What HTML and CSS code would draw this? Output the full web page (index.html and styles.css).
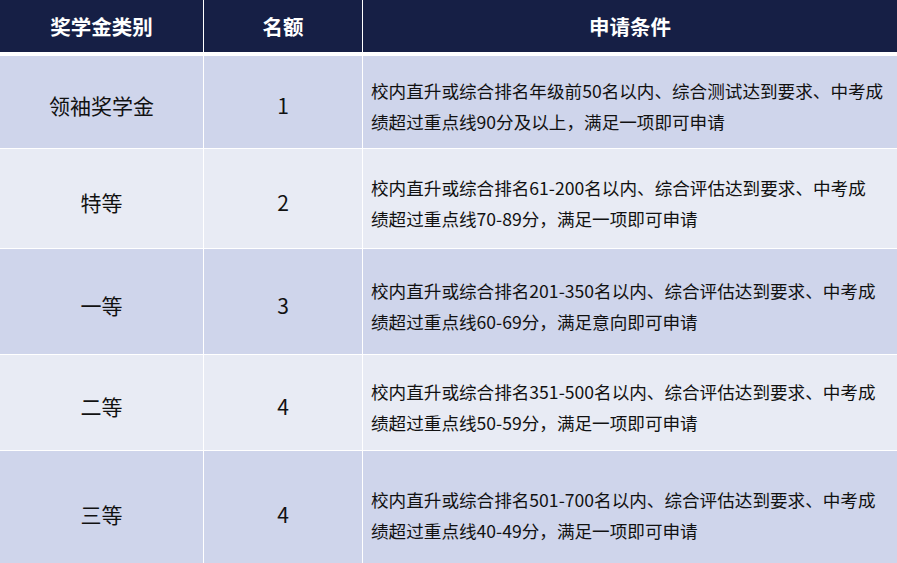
FILE: index.html
```html
<!DOCTYPE html>
<html lang="zh">
<head>
<meta charset="utf-8">
<title>奖学金</title>
<link rel="stylesheet" href="styles.css">
</head>
<body>
<div class="table">
  <div class="row head">
    <div class="cell">奖学金类别</div>
    <div class="cell">名额</div>
    <div class="cell">申请条件</div>
  </div>
  <div class="row odd r1">
    <div class="cell">领袖奖学金</div>
    <div class="cell">1</div>
    <div class="cell cond">校内直升或综合排名年级前50名以内、综合测试达到要求、中考成<br>绩超过重点线90分及以上，满足一项即可申请</div>
  </div>
  <div class="row even r2">
    <div class="cell">特等</div>
    <div class="cell">2</div>
    <div class="cell cond">校内直升或综合排名61-200名以内、综合评估达到要求、中考成<br>绩超过重点线70-89分，满足一项即可申请</div>
  </div>
  <div class="row odd r3">
    <div class="cell">一等</div>
    <div class="cell">3</div>
    <div class="cell cond">校内直升或综合排名201-350名以内、综合评估达到要求、中考成<br>绩超过重点线60-69分，满足意向即可申请</div>
  </div>
  <div class="row even r4">
    <div class="cell">二等</div>
    <div class="cell">4</div>
    <div class="cell cond">校内直升或综合排名351-500名以内、综合评估达到要求、中考成<br>绩超过重点线50-59分，满足一项即可申请</div>
  </div>
  <div class="row odd r5">
    <div class="cell">三等</div>
    <div class="cell">4</div>
    <div class="cell cond">校内直升或综合排名501-700名以内、综合评估达到要求、中考成<br>绩超过重点线40-49分，满足一项即可申请</div>
  </div>
</div>
</body>
</html>
```
FILE: styles.css
```css
html, body {
  margin: 0;
  padding: 0;
  background: #ffffff;
}
body {
  font-family: "Noto Sans CJK SC", "Noto Sans", sans-serif;
  color: #111111;
}
.table {
  display: flex;
  flex-direction: column;
  gap: 1px;
  background: #ffffff;
  width: 897px;
}
.row {
  display: grid;
  grid-template-columns: 203px 158px 1fr;
  column-gap: 1px;
}
.cell {
  display: flex;
  align-items: center;
  justify-content: center;
  font-size: 21px;
  padding-top: 6px;
  box-sizing: border-box;
}
.head {
  height: 52px;
  margin-bottom: 3px;
}
.head .cell {
  background: #161f45;
  color: #ffffff;
  font-weight: 700;
  font-size: 20.5px;
  padding-top: 0;
}
.odd .cell { background: #cfd5eb; }
.even .cell { background: #e8ebf4; }
.cond {
  justify-content: flex-start;
  font-size: 17.6px;
  line-height: 31px;
  padding-left: 8px;
  padding-top: 8px;
}
.r1 { height: 92px; }
.r2 { height: 99px; }
.r3 { height: 105px; }
.r4 { height: 95px; }
.r5 { height: 120px; }
```
